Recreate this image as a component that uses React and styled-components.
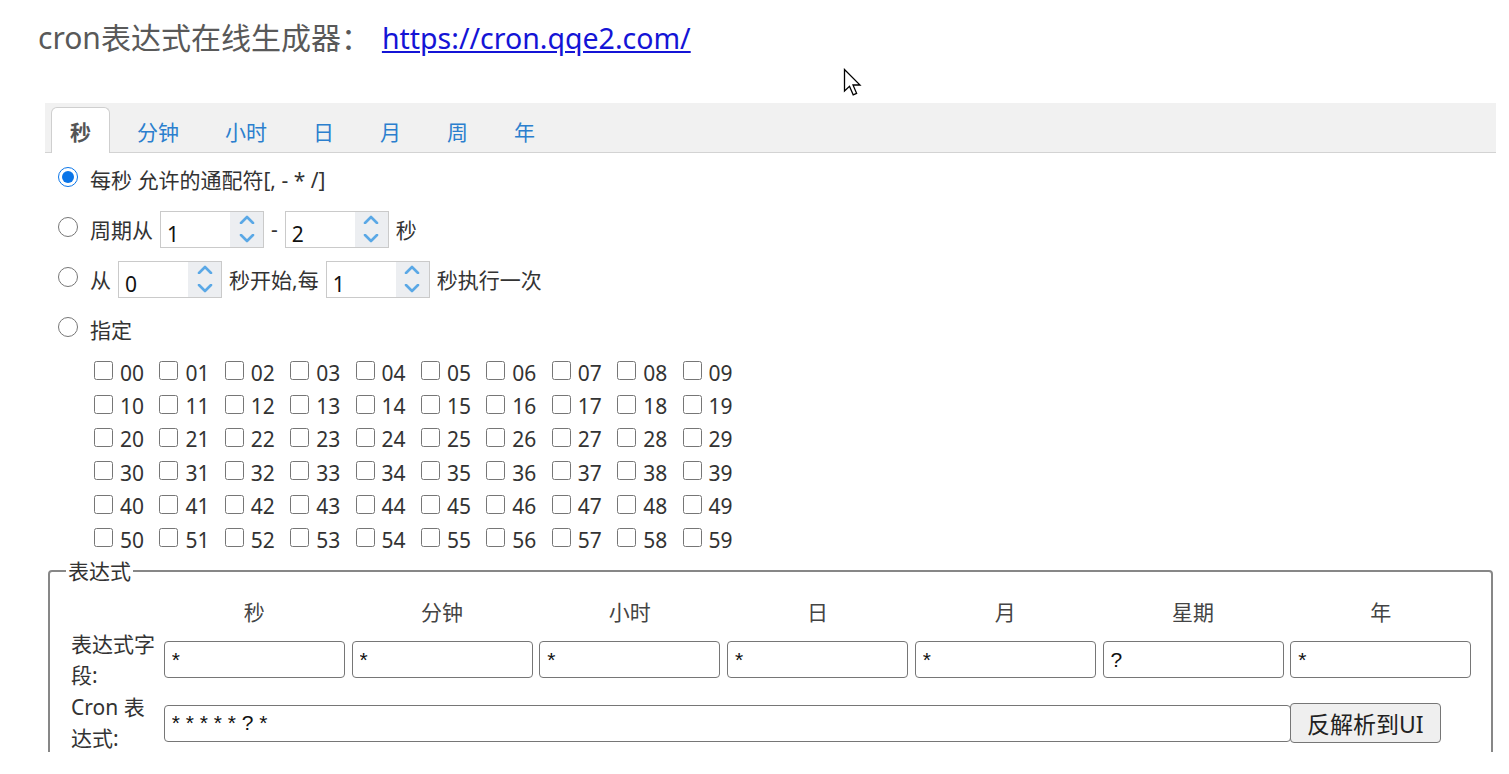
import React from "react";
import styled, { createGlobalStyle } from "styled-components";

const GlobalStyle = createGlobalStyle`
    * { box-sizing: border-box; }
    body {
        margin: 0;
        background: #fff;
        font-family: "Noto Sans", "Noto Sans CJK SC", sans-serif;
    }
`;

const StyledPage = styled.div`
    position: relative;
    width: 1509px;
    height: 774px;
    overflow: hidden;
`;

const StyledTitle = styled.div`
    padding: 18px 0 0 38px;
    font-size: 30px;
    line-height: 40px;
    color: #595959;
`;

const StyledLink = styled.a`
    margin-left: 11px;
    font-size: 28.5px;
    color: #1414d6;
    text-decoration: underline;
`;

const StyledFrame = styled.div`
    margin: 45px 0 0 45px;
    width: 1451px;
    height: 649px;
    overflow: hidden;
    font-size: 21px;
    color: #333;
`;

const StyledTabBar = styled.div`
    display: flex;
    align-items: flex-end;
    height: 50px;
    padding-left: 2px;
    background: #f1f1f1;
    border-bottom: 1px solid #d3d3d3;
`;

const StyledTab = styled.div`
    height: 46px;
    margin: 0 4px -1px;
    padding: 7px 18px 0;
    line-height: 34px;
    border: 1px solid ${p => (p.$active ? "#cfcfcf" : "transparent")};
    border-bottom: none;
    border-radius: 6px 6px 0 0;
    background: ${p => (p.$active ? "#fff" : "transparent")};
    color: ${p => (p.$active ? "#555" : "#2b7fce")};
    font-weight: ${p => (p.$active ? 700 : 400)};
`;

const StyledOptions = styled.div`
    padding: 1px 0 0 13px;
`;

const StyledOptionRow = styled.div`
    display: flex;
    align-items: center;
    gap: 7px;
    height: 50px;
`;

const StyledRadio = styled.input.attrs({ type: "radio", name: "sec" })`
    width: 20px;
    height: 20px;
    margin: 0 5px 4px 0;
    accent-color: #0a75e8;
`;

const StyledNumberBox = styled.div`
    display: flex;
    width: 104px;
    height: 37px;
    border: 1px solid #cacaca;
    background: #fff;
`;

const StyledNumberValue = styled.input`
    flex: 1;
    min-width: 0;
    border: 0;
    outline: 0;
    padding: 9px 0 0 6px;
    background: transparent;
    font: inherit;
    color: #111;
`;

const StyledSpinner = styled.div`
    width: 33px;
    display: flex;
    flex-direction: column;
    align-items: center;
    justify-content: center;
    gap: 10px;
    background: #eceef1;
`;

const StyledCheckGrid = styled.div`
    display: grid;
    grid-template-columns: repeat(10, 65.4px);
    grid-auto-rows: 33.4px;
    padding: 2px 0 0 49px;
`;

const StyledCheckItem = styled.label`
    display: flex;
    align-items: center;
    gap: 7px;
    color: #333;
`;

const StyledCheck = styled.input.attrs({ type: "checkbox" })`
    width: 19px;
    height: 19px;
    margin: 0 0 4px 0;
`;

const StyledFieldset = styled.fieldset`
    margin: 2px 3px 0;
    padding: 13px 20px 20px 21px;
    border: 2px solid #878787;
    border-radius: 4px;
    min-width: 0;
`;

const StyledLegend = styled.legend`
    margin-left: -5px;
    padding: 0 2px;
    line-height: 26px;
    color: #333;
`;

const StyledExprGrid = styled.div`
    display: grid;
    grid-template-columns: 86px repeat(7, 181px);
    column-gap: 6.75px;
    row-gap: 1.5px;
    align-items: center;
`;

const StyledHead = styled.div`
    height: 30px;
    line-height: 30px;
    text-align: center;
    color: #444;
`;

const StyledRowLabel = styled.div`
    line-height: 31px;
    color: #333;
`;

const StyledField = styled.input`
    width: ${p => p.$width || "100%"};
    height: 37px;
    padding: 0 7px;
    border: 1px solid #767676;
    border-radius: 4px;
    background: #fff;
    font-family: "Liberation Sans", "Noto Sans CJK SC", sans-serif;
    font-size: 21px;
    color: #111;
`;

const StyledCronCell = styled.div`
    grid-column: 2 / -1;
    display: flex;
    align-items: center;
`;

const StyledButton = styled.button`
    width: 151px;
    height: 40px;
    margin-left: -1px;
    border: 1px solid #767676;
    border-radius: 4px;
    background: #efefef;
    font-family: inherit;
    font-size: 23px;
    color: #222;
`;

const StyledCursor = styled.svg`
    position: absolute;
    left: 843px;
    top: 68px;
`;

const tabs = ["秒", "分钟", "小时", "日", "月", "周", "年"];
const heads = ["秒", "分钟", "小时", "日", "月", "星期", "年"];
const fields = ["*", "*", "*", "*", "*", "?", "*"];

const Chevron = ({ up }) => (
    <svg width="16" height="9" viewBox="0 0 16 9">
        <polyline
            points={up ? "2,8 8,2 14,8" : "2,1 8,7 14,1"}
            fill="none"
            stroke="#5aa8e6"
            strokeWidth="2.6"
            strokeLinecap="round"
            strokeLinejoin="round"
        />
    </svg>
);

const NumberInput = ({ value }) => (
    <StyledNumberBox>
        <StyledNumberValue defaultValue={value} />
        <StyledSpinner>
            <Chevron up />
            <Chevron />
        </StyledSpinner>
    </StyledNumberBox>
);

const App = () => {
    return (
        <StyledPage>
            <GlobalStyle />
            <StyledTitle>
                cron表达式在线生成器：<StyledLink href="#">https://cron.qqe2.com/</StyledLink>
            </StyledTitle>

            <StyledFrame>
                <StyledTabBar>
                    {tabs.map((t, i) => (
                        <StyledTab key={t} $active={i === 0}>{t}</StyledTab>
                    ))}
                </StyledTabBar>

                <StyledOptions>
                    <StyledOptionRow>
                        <StyledRadio defaultChecked />
                        <span>每秒 允许的通配符[, - * /]</span>
                    </StyledOptionRow>
                    <StyledOptionRow>
                        <StyledRadio />
                        <span>周期从</span>
                        <NumberInput value="1" />
                        <span>-</span>
                        <NumberInput value="2" />
                        <span>秒</span>
                    </StyledOptionRow>
                    <StyledOptionRow>
                        <StyledRadio />
                        <span>从</span>
                        <NumberInput value="0" />
                        <span>秒开始,每</span>
                        <NumberInput value="1" />
                        <span>秒执行一次</span>
                    </StyledOptionRow>
                    <StyledOptionRow>
                        <StyledRadio />
                        <span>指定</span>
                    </StyledOptionRow>
                </StyledOptions>

                <StyledCheckGrid>
                    {Array.from({ length: 60 }, (_, i) => String(i).padStart(2, "0")).map(n => (
                        <StyledCheckItem key={n}>
                            <StyledCheck />
                            {n}
                        </StyledCheckItem>
                    ))}
                </StyledCheckGrid>

                <StyledFieldset>
                    <StyledLegend>表达式</StyledLegend>
                    <StyledExprGrid>
                        <div />
                        {heads.map(h => (
                            <StyledHead key={h}>{h}</StyledHead>
                        ))}

                        <StyledRowLabel>表达式字段:</StyledRowLabel>
                        {fields.map((f, i) => (
                            <StyledField key={i} defaultValue={f} />
                        ))}

                        <StyledRowLabel>Cron 表达式:</StyledRowLabel>
                        <StyledCronCell>
                            <StyledField $width="1127px" defaultValue="* * * * * ? *" />
                            <StyledButton>反解析到UI</StyledButton>
                        </StyledCronCell>
                    </StyledExprGrid>
                </StyledFieldset>
            </StyledFrame>

            <StyledCursor width="21" height="29" viewBox="0 0 21 29">
                <path
                    d="M1.5 1.5 L1.5 23 L6.5 18.3 L10.2 26.8 L13.6 25.3 L10 17 L17 17 Z"
                    fill="#fff"
                    stroke="#000"
                    strokeWidth="1.3"
                    strokeLinejoin="miter"
                />
            </StyledCursor>
        </StyledPage>
    );
};

export default App;
